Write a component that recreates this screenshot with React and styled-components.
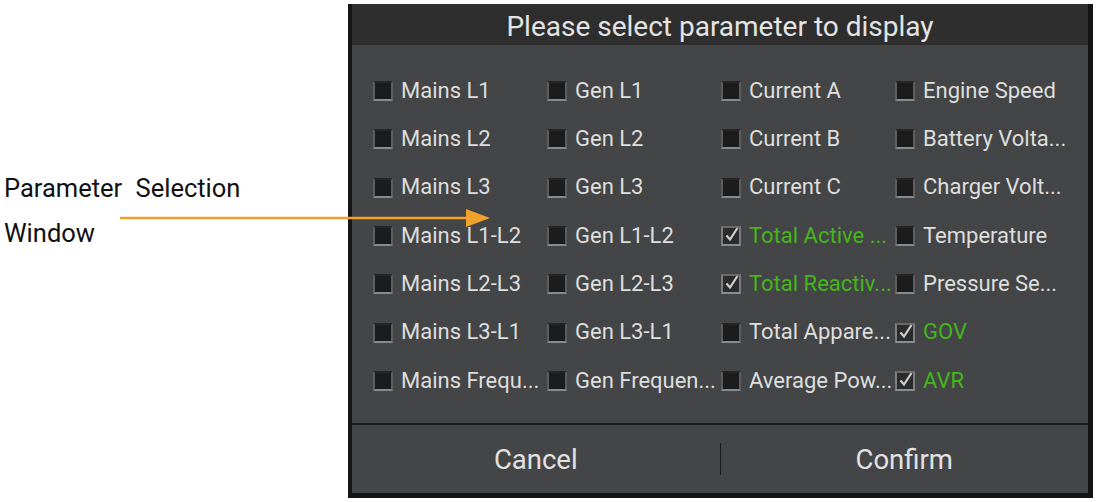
import styled, { createGlobalStyle } from 'styled-components';

const GlobalStyle = createGlobalStyle`
    html, body {
        margin: 0;
        padding: 0;
        background: #ffffff;
        font-family: Roboto, 'Liberation Sans', sans-serif;
    }
`;

const PARAMS = [
    ['Mains L1', 'Gen L1', 'Current A', 'Engine Speed'],
    ['Mains L2', 'Gen L2', 'Current B', 'Battery Volta...'],
    ['Mains L3', 'Gen L3', 'Current C', 'Charger Volt...'],
    ['Mains L1-L2', 'Gen L1-L2', 'Total Active ...', 'Temperature'],
    ['Mains L2-L3', 'Gen L2-L3', 'Total Reactiv...', 'Pressure Se...'],
    ['Mains L3-L1', 'Gen L3-L1', 'Total Appare...', 'GOV'],
    ['Mains Frequ...', 'Gen Frequen...', 'Average Pow...', 'AVR'],
];

const CHECKED = ['Total Active ...', 'Total Reactiv...', 'GOV', 'AVR'];

const Page = styled.div`
    position: relative;
    display: flex;
    width: 1100px;
    height: 502px;
    overflow: hidden;
`;

const Note = styled.div`
    width: 348px;
    padding: 166px 0 0 4px;
    box-sizing: border-box;
    font-size: 25.5px;
    line-height: 45px;
    color: #111;
    word-spacing: 7px;
`;

const Frame = styled.div`
    margin-top: 4px;
    width: 745px;
    height: 494px;
    background: #141414;
    padding: 0 5px 5px 4px;
    box-sizing: border-box;
    display: flex;
    flex-direction: column;
`;

const Title = styled.div`
    height: 41px;
    background: #2e2e2e;
    color: #e4e4e4;
    font-size: 28px;
    display: flex;
    align-items: center;
    justify-content: center;
    padding-top: 3px;
    box-sizing: border-box;
`;

const Body = styled.div`
    height: 378px;
    background: #444546;
    padding: 21px 0 0 21px;
    box-sizing: border-box;
    display: grid;
    grid-template-columns: repeat(4, 174px);
    grid-auto-rows: 48.33px;
`;

const Item = styled.div`
    display: flex;
    align-items: center;
    gap: 8px;
    min-width: 0;
`;

const Box = styled.div`
    flex: none;
    width: 20px;
    height: 20px;
    margin-top: 2px;
    box-sizing: border-box;
    background: ${(p) => (p.$on ? '#2c2c2c' : '#1c1c1c')};
    border: 2px solid ${(p) => (p.$on ? '#7e7e7e' : '#5e5e5e')};
    border-top-color: ${(p) => (p.$on ? '#6a6a6a' : '#262626')};
    border-bottom-color: ${(p) => (p.$on ? '#8e8e8e' : '#8a8a8a')};
    position: relative;
`;

const Tick = styled.svg`
    position: absolute;
    left: 1px;
    top: -3px;
`;

const Label = styled.span`
    font-size: 22px;
    color: ${(p) => (p.$on ? '#44b61b' : '#dedede')};
    white-space: nowrap;
`;

const Divider = styled.div`
    height: 2px;
    background: #1c1c1c;
`;

const Buttons = styled.div`
    flex: 1;
    background: #444546;
    display: flex;
    align-items: center;
`;

const Action = styled.button`
    flex: 1;
    border: none;
    background: none;
    color: #e2e2e2;
    font-family: Roboto, 'Liberation Sans', sans-serif;
    font-size: 27.5px;
    padding: 0;
    height: 100%;
    cursor: pointer;
`;

const Sep = styled.div`
    width: 1px;
    height: 32px;
    background: #1a1a1a;
`;

const Arrow = styled.svg`
    position: absolute;
    left: 0;
    top: 0;
    pointer-events: none;
`;

const Check = () => (
    <Tick width="16" height="18" viewBox="0 0 16 18">
        <path d="M2.5 10.5 L6 14.5 L13.5 3" fill="none" stroke="#cfcfcf" strokeWidth="2.2" />
    </Tick>
);

const App = () => {
    return (
        <Page>
            <GlobalStyle />
            <Note>
                <div>Parameter Selection</div>
                <div>Window</div>
            </Note>
            <Frame>
                <Title>Please select parameter to display</Title>
                <Body>
                    {PARAMS.flat().map((name) => {
                        const on = CHECKED.includes(name);
                        return (
                            <Item key={name}>
                                <Box $on={on}>{on && <Check />}</Box>
                                <Label $on={on}>{name}</Label>
                            </Item>
                        );
                    })}
                </Body>
                <Divider />
                <Buttons>
                    <Action>Cancel</Action>
                    <Sep />
                    <Action>Confirm</Action>
                </Buttons>
            </Frame>
            <Arrow width="500" height="240">
                <line x1="120" y1="218" x2="472" y2="218" stroke="#f0a22c" strokeWidth="2.5" />
                <polygon points="466,209 490,218 466,227" fill="#f0a22c" />
            </Arrow>
        </Page>
    );
};

export default App;
